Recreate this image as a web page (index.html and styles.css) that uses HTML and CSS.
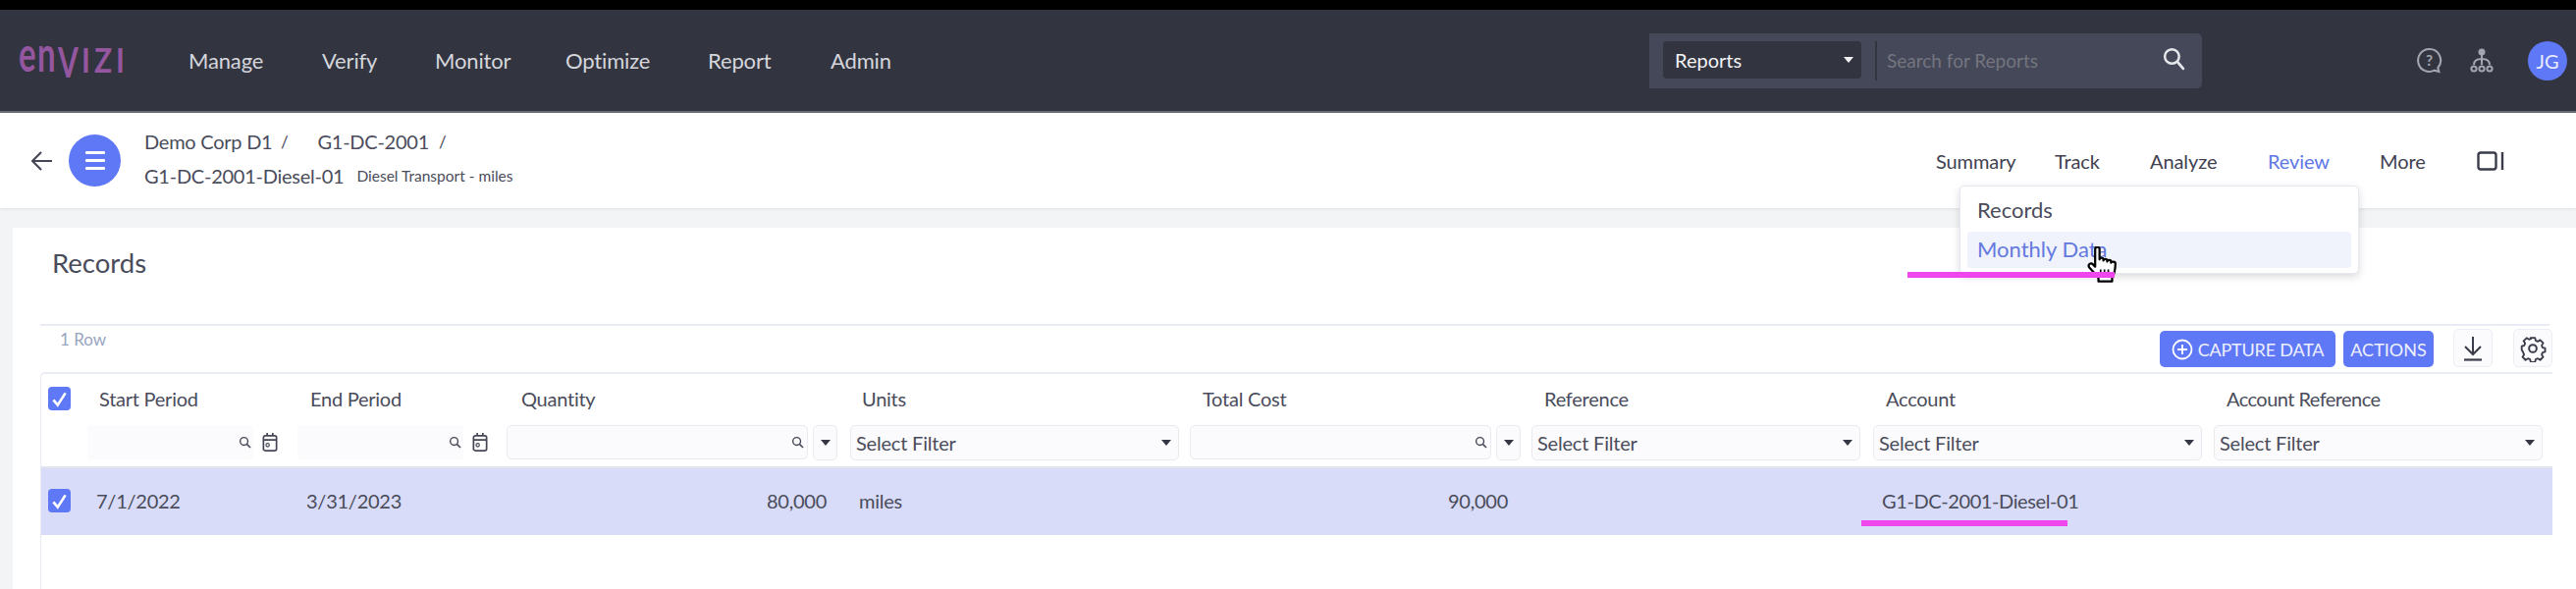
FILE: index.html
```html
<!DOCTYPE html>
<html lang="en">
<head>
<meta charset="utf-8">
<title>Records</title>
<link rel="stylesheet" href="styles.css">
</head>
<body>
<div class="blackbar"></div>
<header class="nav">
  <div class="logo"><span class="lg-en">en</span><span class="lg-v">V</span><span class="lg-rest">IZI</span></div>
  <nav class="nav-links">
    <a class="l-manage">Manage</a><a class="l-verify">Verify</a><a class="l-monitor">Monitor</a><a class="l-optimize">Optimize</a><a class="l-report">Report</a><a>Admin</a>
  </nav>
  <div class="search">
    <div class="search-select"><span>Reports</span><i class="caret caret-light"></i></div>
    <div class="search-div"></div>
    <span class="search-ph">Search for Reports</span>
    <svg class="search-ic" viewBox="0 0 24 24" width="25" height="25"><circle cx="10" cy="10" r="7" fill="none" stroke="#e6e7ec" stroke-width="2.4"/><path d="M15.5 15.5 21 22" stroke="#e6e7ec" stroke-width="2.6" stroke-linecap="round"/></svg>
  </div>
  <div class="nav-icons">
    <svg viewBox="0 0 26 26" width="27" height="27"><path d="M13 2a11 11 0 1 0 5 20.8l4.5 1.2-1-3.800A11 11 0 0 0 13 2z" fill="none" stroke="#a3a5af" stroke-width="2"/><text x="13" y="18" class="help-q">?</text></svg>
    <svg viewBox="0 0 26 26" width="26" height="26"><circle cx="13" cy="4" r="3.500" fill="#a3a5af"/><path d="M13 7v10M13 11c-5 0-8 2-8 6M13 11c5 0 8 2 8 6" fill="none" stroke="#a3a5af" stroke-width="2"/><circle cx="5" cy="21" r="2.600" fill="none" stroke="#a3a5af" stroke-width="2"/><circle cx="13" cy="21" r="2.600" fill="none" stroke="#a3a5af" stroke-width="2"/><circle cx="21" cy="21" r="2.600" fill="none" stroke="#a3a5af" stroke-width="2"/></svg>
    <div class="avatar">JG</div>
  </div>
</header>

<div class="subbar">
  <svg class="back" viewBox="0 0 22 22" width="22" height="22"><path d="M21 11H2M10 2l-9 9 9 9" fill="none" stroke="#454757" stroke-width="2.200"/></svg>
  <div class="menu-btn"><span></span><span></span><span></span></div>
  <div class="crumbs">
    <div class="crumb-row"><span class="c1">Demo Corp D1</span><span class="sl s1">/</span><span class="c2">G1-DC-2001</span><span class="sl">/</span></div>
    <div class="crumb-row"><span>G1-DC-2001-Diesel-01</span><span class="crumb-sub">Diesel Transport - miles</span></div>
  </div>
  <div class="tabs">
    <a class="t1">Summary</a><a class="t2">Track</a><a class="t3">Analyze</a><a class="t4 active">Review</a><a class="t5">More</a>
    <svg viewBox="0 0 28 20" width="28" height="20"><rect x="1.500" y="1.500" width="18" height="17" rx="2.500" fill="none" stroke="#3a3c4a" stroke-width="2.400"/><path d="M26 1v18" stroke="#3a3c4a" stroke-width="2.400"/></svg>
  </div>
</div>
<div class="band"></div>

<main class="page">
  <h1 class="title">Records</h1>
  <div class="toolbar">
    <span class="count">1 Row</span>
    <div class="tools">
      <button class="btn btn-capture"><svg viewBox="0 0 22 22" width="22" height="22"><circle cx="11" cy="11" r="9.500" fill="none" stroke="#fff" stroke-width="1.800"/><path d="M11 6v10M6 11h10" stroke="#fff" stroke-width="1.800"/></svg>CAPTURE DATA</button>
      <button class="btn btn-actions">ACTIONS</button>
      <div class="tool-box box-dl"><svg viewBox="0 0 24 26" width="24" height="26"><path d="M12 1v18M4 11l8 8 8-8" fill="none" stroke="#3a3c4a" stroke-width="2"/><path d="M3 24.500h18" stroke="#3a3c4a" stroke-width="2.200"/></svg></div>
      <div class="tool-box"><svg viewBox="0 0 24 24" width="28" height="28"><path d="M10 2.500h4l.6 2.600 2 .9 2.300-1.400 2.800 2.800-1.400 2.300.8 2 2.400.6v0l0 3.400-2.400.6-.8 2 1.400 2.300-2.800 2.800-2.300-1.400-2 .8-.6 2.600h-4l-.6-2.600-2-.8-2.300 1.400-2.800-2.800 1.400-2.300-.8-2L1.500 13.800v-3.400l2.400-.6.800-2-1.400-2.300 2.800-2.800 2.300 1.400 2-.9z" fill="none" stroke="#3a3c4a" stroke-width="1.700" stroke-linejoin="round" transform="translate(.9 .3) scale(.93)"/><circle cx="12" cy="12" r="3.300" fill="none" stroke="#3a3c4a" stroke-width="1.700"/></svg></div>
    </div>
  </div>

  <div class="table">
    <div class="grid head">
      <div class="cell-check"><span class="check"><svg viewBox="0 0 24 24" width="21" height="21"><path d="M5 13l5 6L19 5" fill="none" stroke="#fff" stroke-width="3"/></svg></span></div>
      <div class="h p12">Start Period</div><div class="h p13">End Period</div><div class="h p15">Quantity</div><div class="h p12">Units</div><div class="h p13">Total Cost</div><div class="h p13">Reference</div><div class="h p13">Account</div><div class="h p13 tight">Account Reference</div>
    </div>
    <div class="grid filters">
      <div></div>
      <div class="f"><div class="date-in"><svg class="mag" viewBox="0 0 14 14" width="13" height="13"><circle cx="6" cy="6" r="4.200" fill="none" stroke="#454757" stroke-width="1.500"/><path d="M9 9l4 4" stroke="#454757" stroke-width="1.600"/></svg></div><svg class="cal" viewBox="0 0 16 20" width="16" height="19"><rect x="1" y="3" width="14" height="16" rx="2" fill="none" stroke="#454757" stroke-width="1.800"/><path d="M1 7.500h14M5 0v3M11 0v3" stroke="#454757" stroke-width="1.800"/><circle cx="5.500" cy="13" r="1.800" fill="none" stroke="#454757" stroke-width="1.200"/></svg></div>
      <div class="f"><div class="date-in"><svg class="mag" viewBox="0 0 14 14" width="13" height="13"><circle cx="6" cy="6" r="4.200" fill="none" stroke="#454757" stroke-width="1.500"/><path d="M9 9l4 4" stroke="#454757" stroke-width="1.600"/></svg></div><svg class="cal" viewBox="0 0 16 20" width="16" height="19"><rect x="1" y="3" width="14" height="16" rx="2" fill="none" stroke="#454757" stroke-width="1.800"/><path d="M1 7.500h14M5 0v3M11 0v3" stroke="#454757" stroke-width="1.800"/><circle cx="5.500" cy="13" r="1.800" fill="none" stroke="#454757" stroke-width="1.200"/></svg></div>
      <div class="f"><div class="num-in"><svg class="mag" viewBox="0 0 14 14" width="13" height="13"><circle cx="6" cy="6" r="4.200" fill="none" stroke="#454757" stroke-width="1.500"/><path d="M9 9l4 4" stroke="#454757" stroke-width="1.600"/></svg></div><div class="op"><i class="caret"></i></div></div>
      <div class="f"><div class="sel">Select Filter<i class="caret"></i></div></div>
      <div class="f"><div class="num-in"><svg class="mag" viewBox="0 0 14 14" width="13" height="13"><circle cx="6" cy="6" r="4.200" fill="none" stroke="#454757" stroke-width="1.500"/><path d="M9 9l4 4" stroke="#454757" stroke-width="1.600"/></svg></div><div class="op"><i class="caret"></i></div></div>
      <div class="f"><div class="sel">Select Filter<i class="caret"></i></div></div>
      <div class="f"><div class="sel">Select Filter<i class="caret"></i></div></div>
      <div class="f"><div class="sel">Select Filter<i class="caret"></i></div></div>
    </div>
    <div class="grid row">
      <div class="cell-check"><span class="check"><svg viewBox="0 0 24 24" width="21" height="21"><path d="M5 13l5 6L19 5" fill="none" stroke="#fff" stroke-width="3"/></svg></span></div>
      <div class="d">7/1/2022</div><div class="d">3/31/2023</div><div class="d num">80,000</div><div class="d">miles</div><div class="d num">90,000</div><div class="d"></div><div class="d tight">G1-DC-2001-Diesel-01</div><div class="d"></div>
    </div>
  </div>
</main>

<div class="dropdown">
  <div class="dd-item">Records</div>
  <div class="dd-item hover">Monthly Data</div>
</div>
<svg class="hand" viewBox="0 0 30 35" width="34" height="39"><path d="M8 2.500c0-2.500 4-2.500 4 0V12c0-2 3.500-2 3.500 0v1c0-2 3.500-2 3.500 0v1c0-2 3.500-2 3.500 0v1c0-1.500 4-1.500 4 .5 0 5-.5 9-3 13v3.500H11V29c-3-4-6-7-8.500-10-1.500-2.500 1.500-4.500 3.500-2.500l2 2z" fill="#fff" stroke="#000" stroke-width="2" stroke-linejoin="round"/><path d="M13 21v6M16.500 21v6M20 21v6" stroke="#000" stroke-width="1.500"/></svg>
<div class="mark mark-a"></div>
<div class="mark mark-b"></div>
</body>
</html>
```
FILE: styles.css
```css
* { box-sizing: border-box; }
html, body { margin: 0; padding: 0; height: 600px; overflow: hidden; background: #fff; }
body { font-family: Lato, "Noto Sans", sans-serif; color: #4a4c5b; position: relative; }
.blackbar { height: 10px; background: #000; }

.nav { height: 105px; background: #32343f; border-bottom: 2px solid #6a6b74; display: flex; align-items: center; padding-left: 19px; }
.logo { flex: none; width: 108px; height: 36px; display: flex; align-items: flex-start; color: #94569e; font-weight: 700; margin-top: -1px; line-height: 30px; }
.logo span { display: block; }
.lg-en { font-size: 33px; width: 40px; letter-spacing: 1.500px; transform-origin: 0 23.300px; transform: scaleY(1.5); }
.lg-v { font-size: 30px; width: 24px; transform-origin: 0 5px; transform: scaleY(1.4); }
.lg-rest { font-size: 30px; width: 44px; letter-spacing: 4px; transform-origin: 0 5px; transform: scaleY(1.16); }
.nav-links { flex: none; display: flex; margin-left: 65px; font-size: 22px; color: #d5d6dc; width: 1488px; letter-spacing: -.15px; }
.nav-links a { display: block; }
.l-manage { width: 136px; }
.l-verify { width: 115px; }
.l-monitor { width: 133px; }
.l-optimize { width: 145px; }
.l-report { width: 125px; }
.search { flex: none; width: 563px; height: 56px; background: #454858; border-radius: 0 5px 5px 0; display: flex; align-items: flex-start; padding: 8px 0 0 14px; position: relative; }
.search-select { width: 202px; height: 38px; background: #32343f; border-radius: 4px; color: #f2f2f5; font-size: 20px; display: flex; align-items: center; justify-content: space-between; padding: 0 8px 0 12px; }
.search-div { width: 2px; height: 40px; background: #32343f; margin-left: 14px; }
.search-ph { margin: 8px 0 0 10px; font-size: 19px; color: #73757f; }
.search-ic { position: absolute; right: 16px; top: 13px; }
.nav-icons { flex: none; display: flex; align-items: center; margin-left: 218px; gap: 27px; }
.avatar { width: 40px; height: 40px; border-radius: 50%; background: #5f78f5; color: #e9ecff; font-size: 20px; display: flex; align-items: center; justify-content: center; margin-left: 7px; }
.help-q { font-size: 15px; font-weight: 700; text-anchor: middle; fill: #a3a5af; font-family: Lato, sans-serif; }

.caret { display: inline-block; width: 0; height: 0; border-left: 5px solid transparent; border-right: 5px solid transparent; border-top: 6px solid #353744; }
.caret-light { border-top-color: #f2f2f5; }

.subbar { height: 97px; background: #fff; display: flex; align-items: center; padding-left: 32px; position: relative; box-shadow: 0 1px 3px rgba(0, 0, 0, .08); }
.back { flex: none; }
.menu-btn { width: 53px; height: 53px; border-radius: 50%; background: #5f78f5; margin-left: 16px; display: flex; flex-direction: column; justify-content: center; align-items: center; gap: 5px; flex: none; }
.menu-btn span { width: 20px; height: 3px; background: #fff; border-radius: 1px; }
.crumbs { margin-left: 24px; font-size: 20px; letter-spacing: -.25px; display: flex; flex-direction: column; gap: 10px; margin-top: -4px; }
.crumb-row { display: flex; align-items: center; height: 25px; }
.c1 { width: 139px; }
.sl { font-size: 17px; }
.s1 { margin-right: 30px; }
.c2 { margin-right: 10px; }
.crumb-sub { font-size: 15.500px; letter-spacing: 0; margin-left: 13px; }
.tabs { position: absolute; left: 1972px; top: 0; height: 97px; display: flex; align-items: center; font-size: 20px; letter-spacing: -.1px; color: #3f4150; }
.tabs a { display: block; }
.t1 { width: 121px; }
.t2 { width: 97px; }
.t3 { width: 120px; }
.t4 { width: 114px; }
.t5 { width: 99px; }
.active { color: #5f78e6; }

.band { height: 20px; background: #f3f4f6; }
.page { margin-left: 13px; background: #fff; padding: 0 24px 0 28px; height: 368px; box-shadow: -13px 0 0 #f3f4f6; }
.title { margin: 0; font-size: 27.500px; font-weight: 400; height: 98px; padding: 19px 0 0 12px; line-height: 34px; color: #4a4c5b; }
.toolbar { border-top: 2px solid #e8ebf3; height: 49px; display: flex; justify-content: space-between; margin-right: 3px; }
.count { font-size: 17px; color: #9aa5c0; margin: 4px 0 0 20px; line-height: 20px; }
.tools { display: flex; align-items: flex-start; padding-top: 5px; margin-right: -3px; }
.btn { height: 37px; background: #5f78f5; border: 0; border-radius: 5px; color: #eef0ff; font-family: inherit; font-size: 18px; display: flex; align-items: center; justify-content: center; padding: 0; }
.btn-capture { width: 179px; gap: 5px; margin-left: 1px; letter-spacing: -.2px; }
.btn-actions { width: 92px; margin-left: 8px; }
.tool-box { width: 40px; height: 39px; margin-top: -2px; margin-left: 21px; border: 1px solid #eceef5; border-radius: 5px; background: #fbfbfd; display: flex; align-items: center; justify-content: center; }
.box-dl { margin-left: 20px; }

.table { border-top: 2px solid #e8ebf3; border-left: 1px solid #e8ebf3; border-top-left-radius: 5px; height: 221px; }
.grid { display: grid; grid-template-columns: 47px 214px 213px 350px 346px 348px 348px 347px 345px; }
.head { height: 52px; align-items: center; padding-bottom: 2px; }
.cell-check { display: flex; padding-left: 7px; }
.check { width: 23px; height: 24px; background: #5f78f5; border-radius: 4px; display: flex; align-items: center; justify-content: center; }
.h { font-size: 20px; letter-spacing: -.25px; color: #4a4c5b; }
.p12 { padding-left: 12px; }
.p13 { padding-left: 13px; }
.p15 { padding-left: 15px; }
.h.tight { letter-spacing: -.55px; }
.d.tight { letter-spacing: -.4px; }
.filters { height: 42px; }
.f { display: flex; align-items: flex-start; font-size: 20px; }
.date-in { width: 169px; height: 35px; background: #fbfbfd; border-radius: 4px; display: flex; align-items: center; justify-content: flex-end; padding-right: 2px; }
.cal { margin: 8px 0 0 9px; }
.num-in { width: 307px; height: 35px; background: #fbfbfd; border: 1px solid #e8eaf0; border-radius: 5px; display: flex; align-items: center; justify-content: flex-end; padding-right: 3px; }
.op { width: 25px; height: 36px; margin-left: 5px; background: #fbfbfd; border: 1px solid #e8eaf0; border-radius: 5px; display: flex; align-items: center; justify-content: center; }
.sel { width: 335px; height: 36px; background: #fbfbfd; border: 1px solid #e8eaf0; border-radius: 5px; display: flex; align-items: center; justify-content: space-between; padding: 0 7px 0 5px; font-size: 20px; letter-spacing: -.2px; color: #4a4c5b; }
.row { height: 70px; background: #d8dcf8; align-items: center; border-top: 2px solid #e2e4ee; padding-bottom: 2px; }
.d { font-size: 20px; letter-spacing: -.25px; padding-left: 9px; color: #4a4c5b; }
.num { text-align: right; padding-right: 24px; padding-left: 0; }

.dropdown { position: absolute; left: 1996px; top: 189px; width: 407px; height: 90px; background: #fff; border: 1px solid #e6e9f2; border-radius: 5px; box-shadow: 0 3px 8px rgba(0, 0, 0, .15); padding: 6px 7px; font-size: 22px; }
.dd-item { height: 37px; padding-left: 10px; line-height: 36px; color: #4a4c5b; margin-bottom: 3px; }
.hover { background: #f0f2fc; color: #6479de; border-radius: 4px; }
.hand { position: absolute; left: 2125px; top: 251px; }
.mark { position: absolute; height: 6px; background: #ef46ee; }
.mark-a { left: 1943px; top: 277px; width: 211px; }
.mark-b { left: 1896px; top: 530px; width: 210px; }
```
